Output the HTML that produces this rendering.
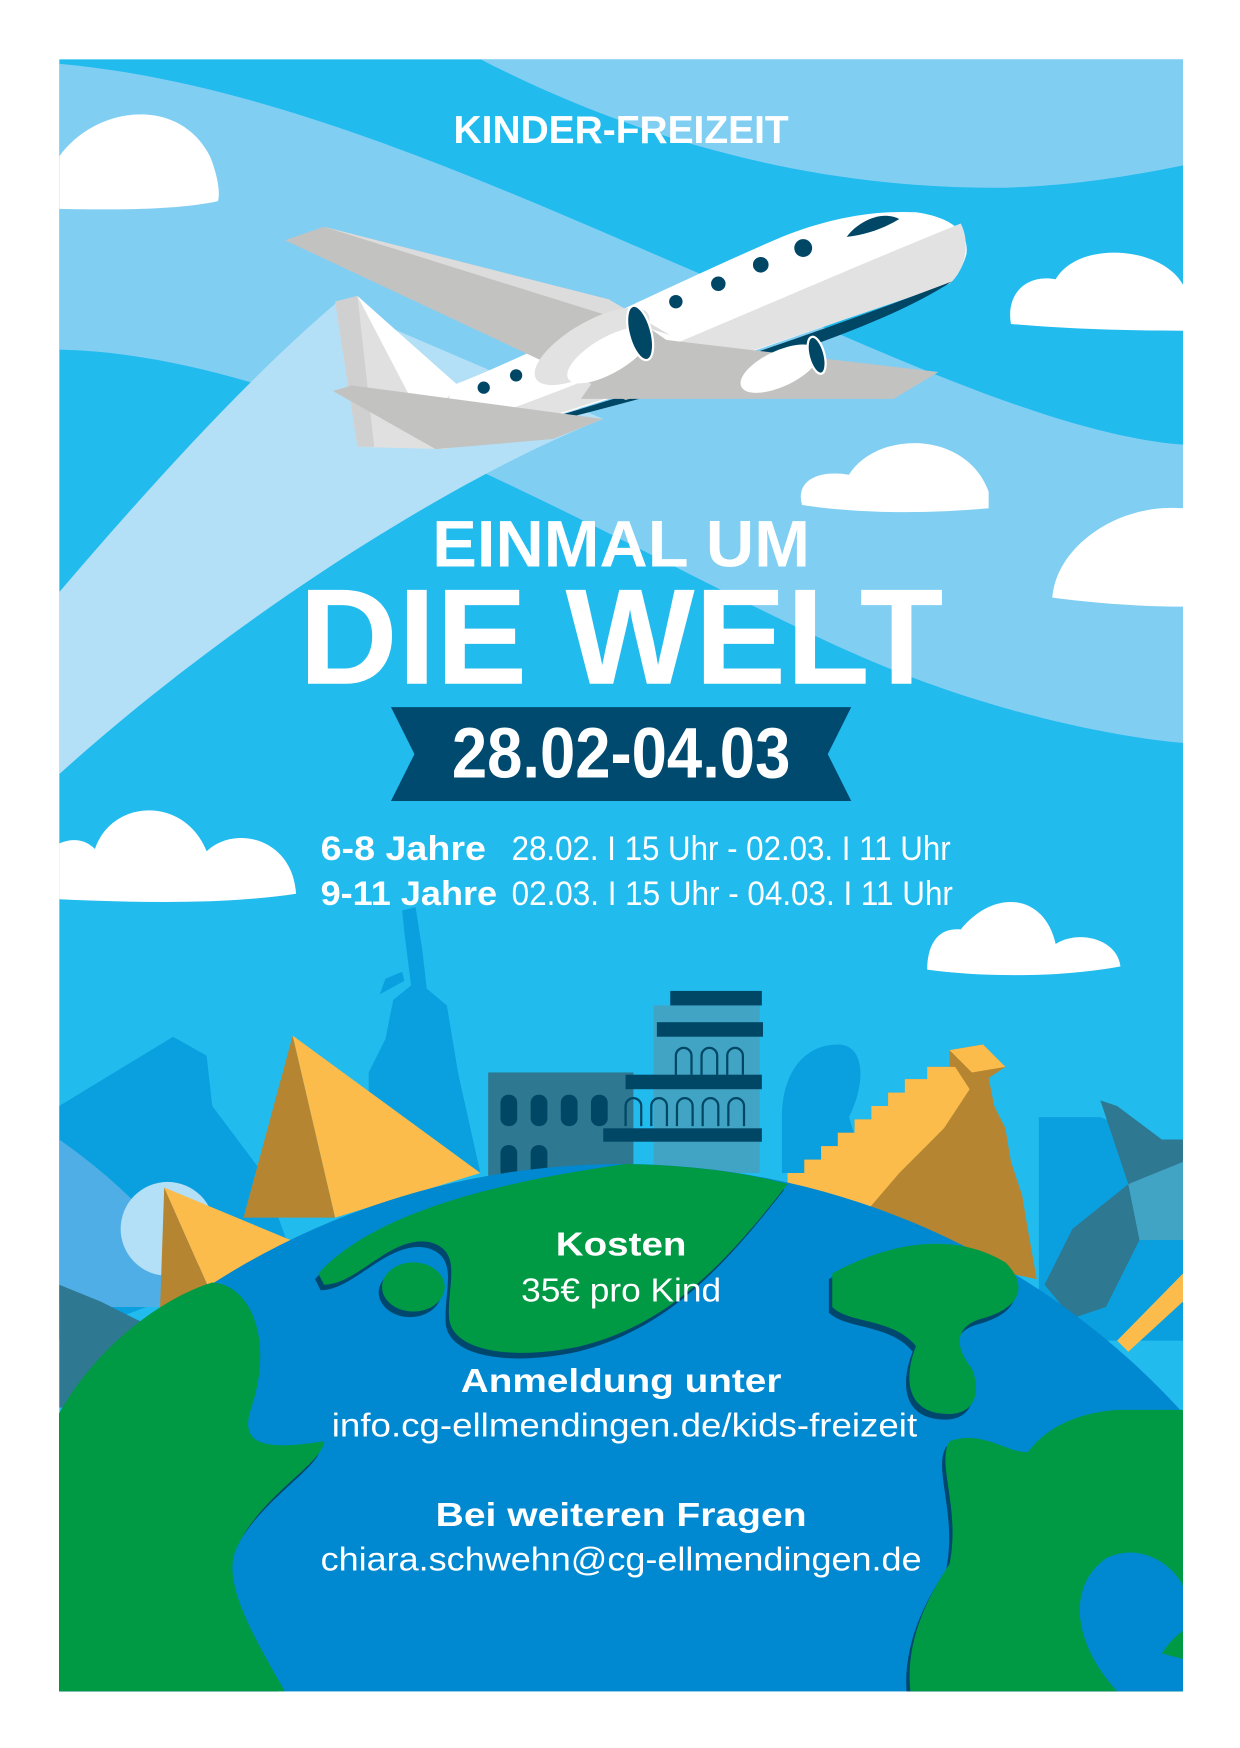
<!DOCTYPE html>
<html><head><meta charset="utf-8"><style>
html,body{margin:0;padding:0;background:#fff;width:1240px;height:1748px;overflow:hidden;}
svg{display:block;}
text{font-family:"Liberation Sans",sans-serif;fill:#fff;}
</style></head><body>
<svg width="1240" height="1748" viewBox="0 0 1110 1564.7" xmlns="http://www.w3.org/2000/svg">
<defs><clipPath id="pc"><rect x="53" y="53" width="1006" height="1461"/></clipPath></defs>
<rect width="1110" height="1564.7" fill="#fff"/>
<g clip-path="url(#pc)">
<rect x="53" y="53" width="1006" height="1461" fill="#22bbee"/>
<path d="M430,53 C560,120 720,170 900,168 C960,166 1010,158 1059,148 L1059,53 Z" fill="#81cef3"/>
<path d="M53,57 C250,75 450,170 650,255 C800,320 950,390 1059,398 L1059,665 C1000,660 900,640 800,600 C600,520 300,318 53,313 Z" fill="#81cef3"/>
<path d="M53,530 C130,440 220,340 300,272 L540,375 C400,430 200,560 53,693 Z" fill="#b3e0f7"/>
<g fill="#fff">
<path d="M53,187 L53,140 C85,95 160,85 188,140 C196,160 197,175 195,180 C160,188 100,188 53,187Z"/>
<path d="M905,290 C900,262 920,245 945,250 C965,215 1040,220 1059,255 L1059,296 C1000,296 950,294 905,290Z"/>
<path d="M718,452 C712,432 730,420 760,425 C785,385 865,385 885,440 L885,455 C830,460 770,460 718,452Z"/>
<path d="M942,535 C945,490 1000,450 1059,455 L1059,543 C1020,543 980,540 942,535Z"/>
<path d="M53,805 L53,755 C70,748 80,755 85,760 C100,715 165,712 185,762 C210,738 262,750 265,800 C200,810 120,808 53,805Z"/>
<path d="M830,868 C830,845 840,830 860,832 C890,795 935,800 945,845 C965,832 1000,840 1003,865 C950,875 880,875 830,868Z"/>
</g>
<!-- plane -->
<g>
<path d="M300,270 L320,265 L410,345 L400,402 L320,400 Z" fill="#e0e0e0"/>
<path d="M320,265 L410,345 L380,380 Z" fill="#fff"/>
<path d="M300,270 L320,265 L335,400 L320,400 Z" fill="#d0d0d0"/>
<path d="M390,402 L405,345 C470,320 600,255 700,212 C740,196 780,188 820,190 C855,195 868,210 865,228 C860,245 852,252 845,255 C700,305 520,370 390,402Z" fill="#fff"/>
<path d="M440,372 C560,330 700,265 860,200 C868,215 866,240 850,254 C700,305 540,360 400,400 Z" fill="#e2e2e2"/>
<path d="M390,402 C520,370 700,310 852,252 C780,300 600,355 390,402Z" fill="#004766"/>
<path d="M758,212 C768,198 790,188 805,196 C790,205 775,210 758,212Z" fill="#004766"/>
<path d="M255,215 L290,203 L545,268 L640,335 L560,358 Z" fill="#c2c2c1"/>
<path d="M290,203 L545,268 L600,300 Z" fill="#dcdcdc"/>
<path d="M560,300 L840,333 L800,357 L520,357 Z" fill="#c2c2c1"/>
<path d="M298,350 L315,345 L540,375 L495,393 L390,402 Z" fill="#c2c2c1"/>
<ellipse cx="530" cy="310" rx="58" ry="22" transform="rotate(-30 530 310)" fill="#e2e2e2"/>
<ellipse cx="545" cy="318" rx="42" ry="16" transform="rotate(-30 545 318)" fill="#fff"/>
<ellipse cx="573" cy="298" rx="10" ry="25" transform="rotate(-15 573 298)" fill="#004766" stroke="#fff" stroke-width="2"/>
<ellipse cx="698" cy="330" rx="38" ry="16" transform="rotate(-25 698 330)" fill="#fff"/>
<ellipse cx="731" cy="318" rx="7" ry="17" transform="rotate(-15 731 318)" fill="#004766" stroke="#fff" stroke-width="2"/>
<g fill="#004766"><circle cx="605" cy="270" r="6"/><circle cx="643" cy="254" r="6.5"/><circle cx="681" cy="237" r="7"/><circle cx="719" cy="222" r="8"/><circle cx="433" cy="347" r="5.5"/><circle cx="462" cy="336" r="5.5"/></g>
</g>
<g fill="#0aa0e0">
<path d="M53,990 L155,928 L185,945 L190,990 L235,1050 L260,1120 L53,1200 Z"/>
<path d="M330,960 L345,930 L352,895 L368,882 L362,835 L360,815 L372,812 L378,850 L382,885 L400,900 L410,960 L430,1050 L330,1050Z"/>
<path d="M340,890 L362,878 L360,870 L345,876Z"/>
<path d="M700,1000 C700,960 720,935 750,935 C775,935 775,970 760,1000 L775,1050 L700,1050Z"/>
<path d="M930,1000 L985,1000 L1059,1030 L1059,1200 L930,1200Z"/>
</g>
<path d="M53,1020 C110,1060 160,1110 190,1170 L53,1170Z" fill="#50aee6"/>
<circle cx="150" cy="1100" r="42" fill="#b3e0f7"/>
<path d="M262,927 L218,1090 L300,1090 Z" fill="#b58532"/>
<path d="M262,927 L430,1050 L300,1090 Z" fill="#fbbc4c"/>
<path d="M147,1063 L143,1180 L190,1160 Z" fill="#b58532"/>
<path d="M147,1063 L260,1110 L190,1160 Z" fill="#fbbc4c"/>
<rect x="437" y="960" width="130" height="95" fill="#2e7891"/>
<g fill="#004766"><rect x="448" y="980" width="15" height="28" rx="7"/><rect x="475" y="980" width="15" height="28" rx="7"/><rect x="502" y="980" width="15" height="28" rx="7"/><rect x="529" y="980" width="15" height="28" rx="7"/><rect x="448" y="1025" width="15" height="30" rx="7"/><rect x="475" y="1025" width="15" height="30" rx="7"/></g>
<rect x="585" y="900" width="95" height="150" fill="#41a4c4"/>
<g fill="#004766"><rect x="600" y="887" width="82" height="13"/><rect x="588" y="915" width="95" height="13"/><rect x="560" y="962" width="122" height="13"/><rect x="540" y="1010" width="142" height="12"/></g>
<g fill="none" stroke="#004766" stroke-width="2"><path d="M605,962 V945 a7,7 0 0 1 14,0 V962 M628,962 V945 a7,7 0 0 1 14,0 V962 M651,962 V945 a7,7 0 0 1 14,0 V962 M560,1008 V990 a7,7 0 0 1 14,0 V1008 M583,1008 V990 a7,7 0 0 1 14,0 V1008 M606,1008 V990 a7,7 0 0 1 14,0 V1008 M629,1008 V990 a7,7 0 0 1 14,0 V1008 M652,1008 V990 a7,7 0 0 1 14,0 V1008"/></g>
<!-- mayan stepped pyramid -->
<path d="M705,1060 L705,1050 L720,1050 L720,1038 L735,1038 L735,1026 L750,1026 L750,1014 L765,1014 L765,1002 L780,1002 L780,990 L795,990 L795,978 L810,978 L810,966 L830,966 L830,955 L850,955 L850,940 L880,935 L900,955 L885,965 L890,990 L900,1010 L905,1040 L915,1070 L920,1100 L928,1145 L760,1110 Z" fill="#b58532"/>
<path d="M705,1060 L705,1050 L720,1050 L720,1038 L735,1038 L735,1026 L750,1026 L750,1014 L765,1014 L765,1002 L780,1002 L780,990 L795,990 L795,978 L810,978 L810,966 L830,966 L830,955 L855,955 L868,975 L845,1010 L805,1050 L775,1085 Z" fill="#fbbc4c"/>
<path d="M850,940 L880,935 L900,955 L870,960Z" fill="#fbbc4c"/>
<path d="M985,985 L1000,990 L1040,1020 L1059,1020 L1059,1100 L1020,1110 L990,1170 L960,1180 L935,1150 L960,1100 L1010,1060 Z" fill="#2e7891"/>
<path d="M1010,1060 L1059,1040 L1059,1110 L1020,1110 Z" fill="#41a4c4"/>
<path d="M1000,1200 L1059,1140 L1059,1165 L1010,1210 Z" fill="#fbbc4c"/>
<path d="M53,1150 L90,1165 L130,1185 L120,1210 L80,1230 L60,1260 L53,1260 Z" fill="#2e7891"/>
<circle cx="556" cy="1721" r="679" fill="#0088d1"/>
<g fill="#00476e" transform="translate(-3,5)">
<path d="M285,1140 C330,1090 430,1060 560,1042 C620,1043 670,1050 705,1060 C650,1130 600,1185 520,1205 C460,1218 405,1210 402,1180 C400,1150 415,1120 385,1112 C350,1105 320,1150 290,1150 Z"/>
<ellipse cx="370" cy="1152" rx="28" ry="22"/>
<path d="M745,1140 C790,1115 850,1100 900,1130 C920,1150 915,1170 880,1180 C860,1185 850,1200 870,1225 C880,1250 870,1270 840,1265 C810,1260 810,1230 820,1205 C800,1180 760,1185 745,1170 Z"/>
<path d="M53,1265 C90,1200 150,1160 190,1148 C225,1150 245,1200 225,1260 C215,1290 230,1300 290,1290 C290,1310 230,1340 210,1390 C200,1420 230,1470 255,1514 L53,1514 Z"/>
<path d="M1059,1262 L1059,1514 L815,1514 C810,1470 830,1430 850,1400 C860,1350 838,1310 850,1290 C880,1280 900,1300 920,1300 C935,1280 960,1265 1000,1262 Z"/>
</g>
<g fill="#009a44">
<path d="M285,1140 C330,1090 430,1060 560,1042 C620,1043 670,1050 705,1060 C650,1130 600,1185 520,1205 C460,1218 405,1210 402,1180 C400,1150 415,1120 385,1112 C350,1105 320,1150 290,1150 Z"/>
<ellipse cx="370" cy="1152" rx="28" ry="22"/>
<path d="M745,1140 C790,1115 850,1100 900,1130 C920,1150 915,1170 880,1180 C860,1185 850,1200 870,1225 C880,1250 870,1270 840,1265 C810,1260 810,1230 820,1205 C800,1180 760,1185 745,1170 Z"/>
<path d="M53,1265 C90,1200 150,1160 190,1148 C225,1150 245,1200 225,1260 C215,1290 230,1300 290,1290 C290,1310 230,1340 210,1390 C200,1420 230,1470 255,1514 L53,1514 Z"/>
<path d="M1059,1262 L1059,1514 L815,1514 C810,1470 830,1430 850,1400 C860,1350 838,1310 850,1290 C880,1280 900,1300 920,1300 C935,1280 960,1265 1000,1262 Z"/>
</g>
<path d="M1000,1514 C960,1470 955,1420 990,1395 C1020,1380 1050,1400 1059,1420 L1059,1514Z" fill="#0088d1"/>
<path d="M1040,1480 C1050,1465 1059,1460 1059,1460 L1059,1485Z" fill="#009a44"/>
<path d="M350,633 L762,633 L741,675 L762,717 L350,717 L371,675 Z" fill="#004a70"/>
</g>
<text x="556" y="128" text-anchor="middle" font-size="35" font-weight="bold" textLength="300" lengthAdjust="spacingAndGlyphs">KINDER-FREIZEIT</text>
<text x="556" y="507" text-anchor="middle" font-size="59" font-weight="bold" textLength="338" lengthAdjust="spacingAndGlyphs">EINMAL UM</text>
<text x="556" y="612" text-anchor="middle" font-size="122" font-weight="bold" textLength="577" lengthAdjust="spacingAndGlyphs">DIE WELT</text>
<text x="556" y="696" text-anchor="middle" font-size="64" font-weight="bold" textLength="303" lengthAdjust="spacingAndGlyphs">28.02-04.03</text>
<text x="287" y="770" font-size="31" font-weight="bold" textLength="148" lengthAdjust="spacingAndGlyphs">6-8 Jahre</text>
<text x="458" y="770" font-size="31" textLength="393" lengthAdjust="spacingAndGlyphs">28.02. I 15 Uhr - 02.03. I 11 Uhr</text>
<text x="287" y="810" font-size="31" font-weight="bold" textLength="158" lengthAdjust="spacingAndGlyphs">9-11 Jahre</text>
<text x="458" y="810" font-size="31" textLength="395" lengthAdjust="spacingAndGlyphs">02.03. I 15 Uhr - 04.03. I 11 Uhr</text>
<text x="556" y="1124" text-anchor="middle" font-size="30" font-weight="bold" textLength="117" lengthAdjust="spacingAndGlyphs">Kosten</text>
<text x="556" y="1165" text-anchor="middle" font-size="30" textLength="179" lengthAdjust="spacingAndGlyphs">35€ pro Kind</text>
<text x="556" y="1246" text-anchor="middle" font-size="30" font-weight="bold" textLength="287" lengthAdjust="spacingAndGlyphs">Anmeldung unter</text>
<text x="559" y="1286" text-anchor="middle" font-size="30" textLength="524" lengthAdjust="spacingAndGlyphs">info.cg-ellmendingen.de/kids-freizeit</text>
<text x="556" y="1366" text-anchor="middle" font-size="30" font-weight="bold" textLength="332" lengthAdjust="spacingAndGlyphs">Bei weiteren Fragen</text>
<text x="556" y="1406" text-anchor="middle" font-size="30" textLength="538" lengthAdjust="spacingAndGlyphs">chiara.schwehn@cg-ellmendingen.de</text>
</svg>
</body></html>
